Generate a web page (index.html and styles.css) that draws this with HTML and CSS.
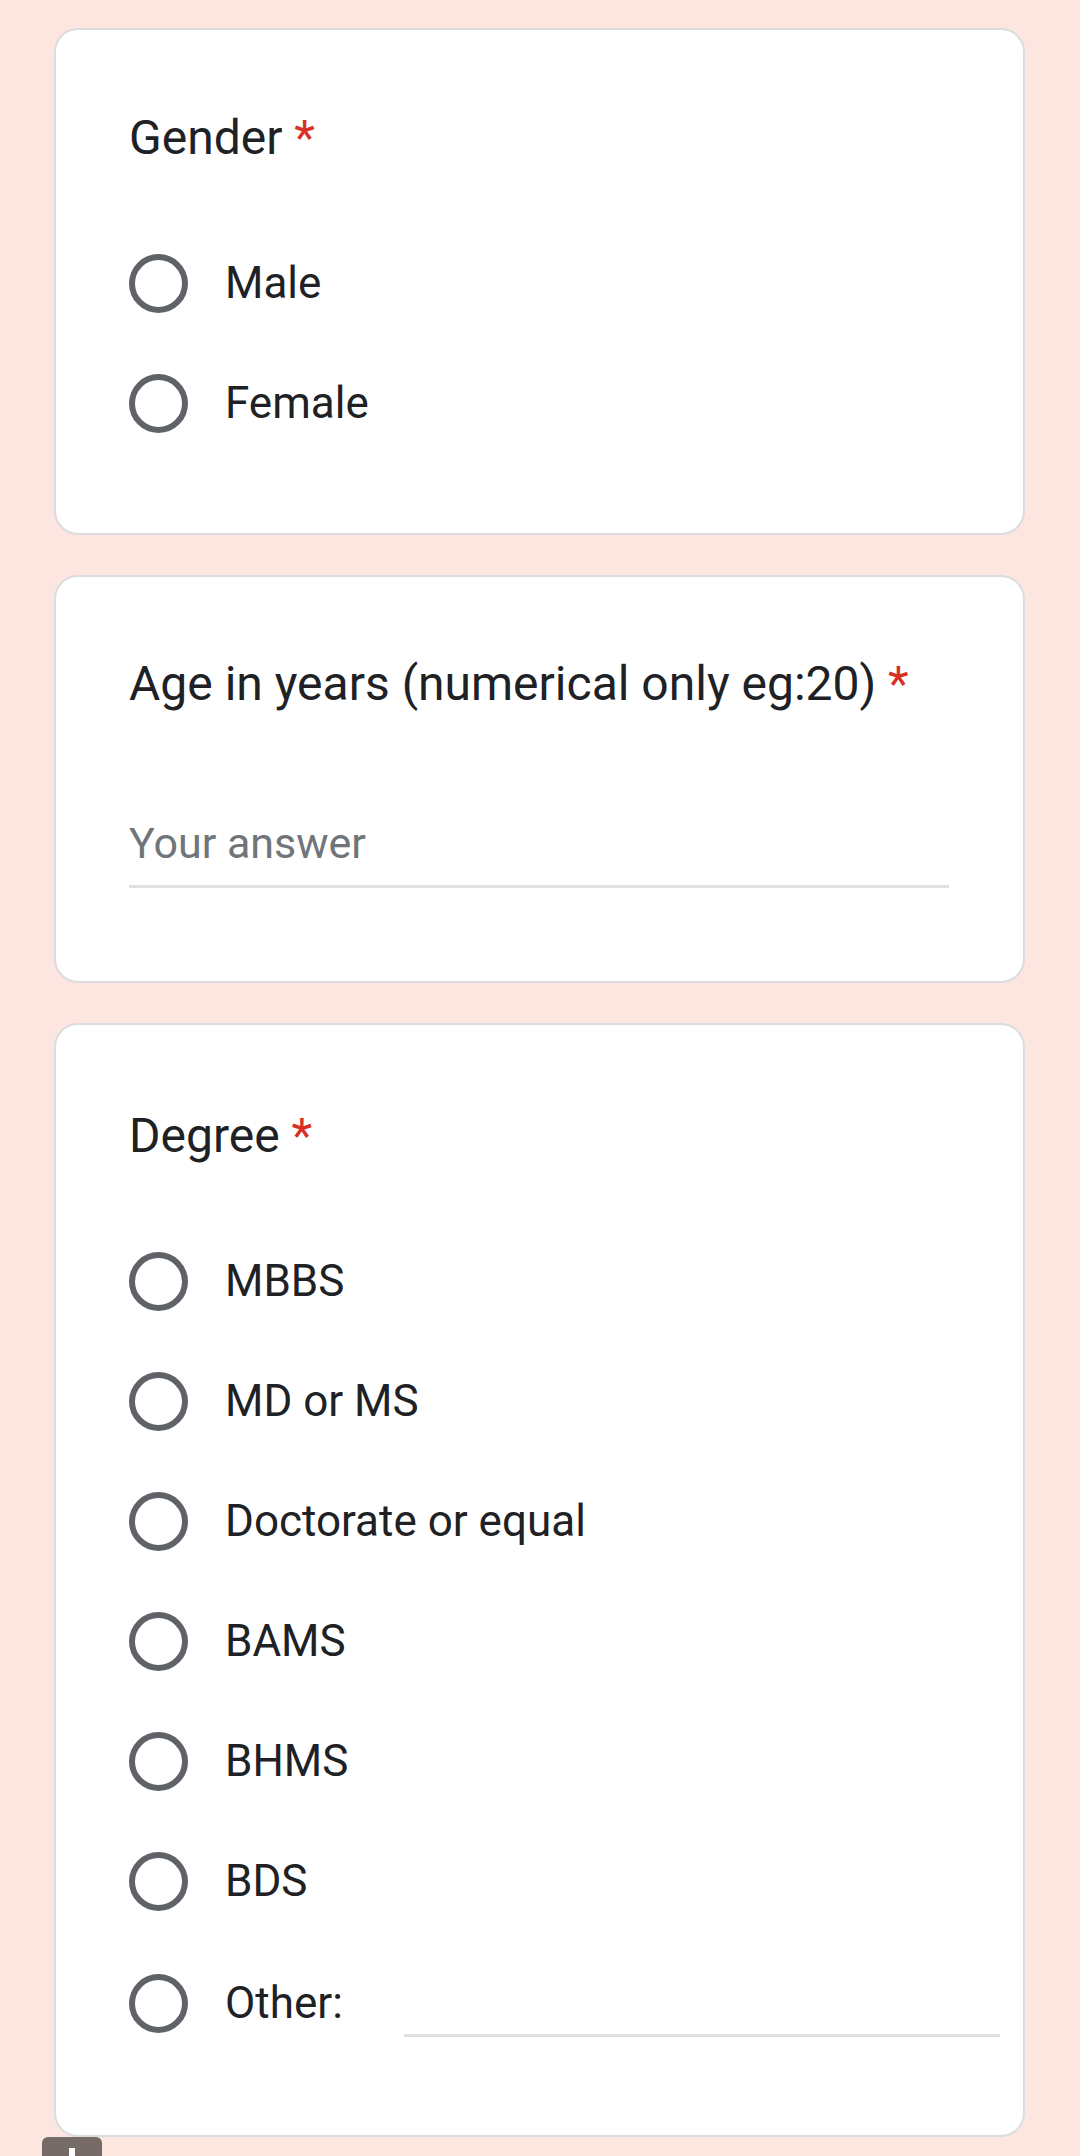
FILE: index.html
```html
<!DOCTYPE html>
<html lang="en">
<head>
<meta charset="utf-8">
<title>Form</title>
<link rel="stylesheet" href="styles.css">
</head>
<body>
<main class="page">
  <section class="card card-gender">
    <h2 class="q-title">Gender <span class="req">*</span></h2>
    <ul class="options">
      <li class="option"><span class="radio"></span><span class="label">Male</span></li>
      <li class="option"><span class="radio"></span><span class="label">Female</span></li>
    </ul>
  </section>

  <section class="card card-age">
    <h2 class="q-title">Age in years (numerical only eg:20) <span class="req">*</span></h2>
    <div class="answer">Your answer</div>
  </section>

  <section class="card card-degree">
    <h2 class="q-title">Degree <span class="req">*</span></h2>
    <ul class="options">
      <li class="option"><span class="radio"></span><span class="label">MBBS</span></li>
      <li class="option"><span class="radio"></span><span class="label">MD or MS</span></li>
      <li class="option"><span class="radio"></span><span class="label">Doctorate or equal</span></li>
      <li class="option"><span class="radio"></span><span class="label">BAMS</span></li>
      <li class="option"><span class="radio"></span><span class="label">BHMS</span></li>
      <li class="option"><span class="radio"></span><span class="label">BDS</span></li>
      <li class="option option-other"><span class="radio"></span><span class="label">Other:</span><span class="other-input"></span></li>
    </ul>
  </section>

  <div class="fab-peek"><span class="fab-bar"></span></div>
</main>
</body>
</html>
```

FILE: styles.css
```css
* {
  box-sizing: border-box;
}

html, body {
  margin: 0;
  padding: 0;
}

body {
  background: #fde6e0;
  font-family: Roboto, "Noto Sans", "Liberation Sans", sans-serif;
  color: #202124;
  width: 1080px;
  height: 2156px;
  overflow: hidden;
}

.page {
  position: relative;
  display: flex;
  flex-direction: column;
  gap: 40px;
  padding: 28px 55px 0 54px;
  height: 2156px;
}

.card {
  background: #ffffff;
  border: 2px solid #dadce0;
  border-radius: 24px;
  padding: 80px 74px 70px 73px;
}

.q-title {
  margin: 0;
  font-size: 48px;
  font-weight: 400;
  line-height: 56px;
  letter-spacing: 0;
}

.req {
  color: #d93025;
}

.options {
  list-style: none;
  margin: 57px 0 0 0;
  padding: 0;
}

.option {
  display: flex;
  align-items: center;
  height: 120px;
  font-size: 44px;
}

.radio {
  flex: none;
  width: 59px;
  height: 59px;
  border: 6px solid #5f6368;
  border-radius: 50%;
  margin-right: 37px;
}

.label {
  line-height: 56px;
}

.card-age {
  padding: 79px 74px 93px 73px;
}

.answer {
  margin-top: 103px;
  font-size: 43px;
  line-height: 56px;
  color: #70757a;
  padding-bottom: 14px;
  border-bottom: 3px solid #e0e0e0;
}

.card-degree {
  padding: 83px 74px 70px 73px;
}

.option-other {
  height: 124px;
}

.other-input {
  flex: 1;
  height: 68px;
  margin-left: 61px;
  margin-right: -51px;
  border-bottom: 3px solid #e0e0e0;
}

.fab-peek {
  position: absolute;
  left: 42px;
  top: 2137px;
  width: 60px;
  height: 40px;
  background: #776b67;
  border-radius: 6px 6px 0 0;
}

.fab-bar {
  position: absolute;
  left: 27px;
  top: 11px;
  width: 6px;
  height: 20px;
  background: #ffffff;
}
```
